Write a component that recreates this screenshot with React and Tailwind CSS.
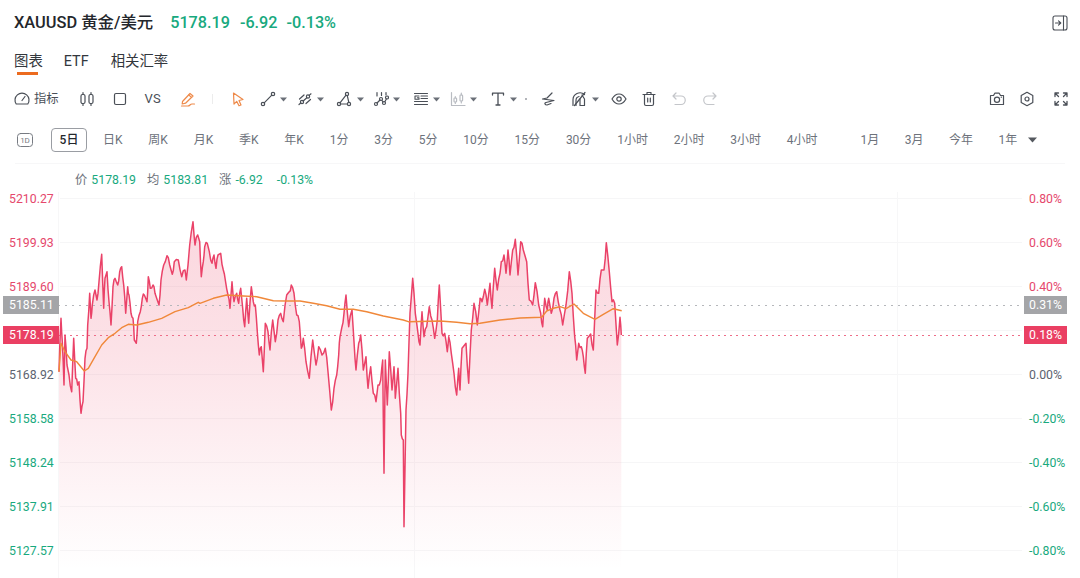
import React from "react";

const raw = [
  [55, 215, [[12,470],[14,400],[18,310],[22,380],[27,510],[30,360],[36,450],[42,480],[50,530],[56,370],[62,490],[68,510],[72,500],[78,595],[84,560],[90,430],[96,400],[98,330],[104,235],[108,310],[112,270],[120,225],[126,255],[132,200],[140,118],[146,280],[150,190],[156,170],[162,260],[168,330],[174,215],[180,190],[188,210],[194,170],[200,155],[206,210],[212,295],[218,215],[222,240],[228,295],[234,310],[238,375],[244,385],[248,320],[256,290],[262,250],[268,240],[276,260],[280,185],[286,220],[294,210],[300,235],[312,270],[318,195],[326,150],[336,122],[344,150],[352,178],[358,140],[370,135],[380,185],[390,165],[394,195],[404,90],[414,20],[420,90],[428,60],[434,80]]],
  [200, 215, [[4,185],[10,140],[14,95],[22,85],[28,110],[36,145],[42,120],[48,160],[54,120],[62,115],[70,165],[76,195],[84,240],[90,280],[96,200],[102,260],[110,235],[116,265],[122,220],[128,280],[134,335],[140,250],[146,325],[154,215],[160,260],[166,270],[172,350],[178,420],[184,395],[190,470],[196,325],[204,350],[210,405],[218,315],[226,380],[234,315],[242,295],[250,320],[260,240],[268,230],[274,210],[282,235],[290,300],[298,320],[304,400],[310,370],[318,440],[328,490],[338,375],[348,450],[356,395],[366,420],[376,400],[384,470],[394,585],[402,520],[410,480],[416,420]]],
  [340, 270, [[0,200],[6,170],[12,130],[18,75],[26,170],[36,120],[42,215],[48,300],[56,220],[62,195],[70,300],[78,260],[84,355],[92,290],[100,370],[108,395],[114,345],[122,330],[128,270],[132,610],[136,270],[142,405],[148,245],[156,360],[162,290],[166,385],[174,295],[182,430],[184,495],[190,510],[192,770],[198,420],[204,310],[210,130],[218,25],[226,130],[234,190],[240,225],[246,125],[252,200],[260,170],[268,110],[276,150],[284,205],[292,150],[298,45],[306,190],[314,190],[322,245],[326,200],[334,250],[342,310],[350,375],[356,295],[360,360],[366,235],[378,220],[386,340],[394,180],[402,100],[412,165],[420,90]]],
  [480, 230, [[0,205],[6,215],[14,178],[22,225],[30,160],[36,235],[44,115],[52,180],[60,130],[64,95],[72,75],[78,130],[84,60],[90,135],[98,60],[106,28],[114,135],[122,35],[130,60],[140,95],[148,210],[158,225],[166,158],[176,225],[182,250],[188,290],[194,205],[202,240],[206,205],[214,250],[222,205],[230,185],[240,240],[248,285],[258,225],[268,125],[276,190],[284,320],[290,390],[296,340],[304,350],[310,380],[316,430],[322,325],[332,312],[340,360],[348,180],[356,190],[364,120],[372,120],[379,38],[388,125],[396,215],[404,220],[412,345],[420,262],[424,315]]],
];
const avgRaw = [
  [55, 215, [[12,470],[18,385],[30,410],[48,435],[65,440],[88,468],[100,460],[120,425],[140,390],[160,368],[180,355],[200,338],[220,328],[245,330],[280,322],[320,310],[360,290],[400,278],[430,262]]],
  [200, 215, [[0,265],[40,250],[80,240],[130,243],[170,245],[220,257],[260,258],[300,258],[340,265],[380,272],[420,283]]],
  [340, 270, [[40,118],[80,125],[130,138],[190,150],[205,155],[300,153],[350,157],[390,161]]],
  [480, 230, [[0,280],[60,270],[120,264],[185,262],[200,243],[220,235],[240,230],[258,236],[282,222],[310,250],[345,268],[370,253],[400,236],[425,242]]],
];
const toPts = (segs) =>
  segs.flatMap(([ox, oy, pts]) => pts.map(([x, y]) => [ox + x / 3, oy + y / 3]));
const dense = (pts) => {
  const out = [];
  pts.forEach((p, i) => {
    out.push(p);
    const q = pts[i + 1];
    if (q && q[0] - p[0] > 1.2) {
      const off = (((i * 7) % 5) - 2) * 1.3;
      out.push([(p[0] + q[0]) / 2, (p[1] + q[1]) / 2 + off]);
    }
  });
  return out;
};
const fmt = (pts) => pts.map((p, i) => `${i ? "L" : "M"}${p[0].toFixed(1)} ${p[1].toFixed(1)}`).join("");
const price = dense(toPts(raw));
const lineD = fmt(price);
const areaD = `${lineD}L${price[price.length - 1][0].toFixed(1)} 578L${price[0][0].toFixed(1)} 578Z`;
const avgD = fmt(toPts(avgRaw));

const red = "text-[#e5486c]";
const green = "text-[#18a97e]";
const gray = "text-[#5c6370]";
const left = [
  ["5210.27", red], ["5199.93", red], ["5189.60", red],
  ["", ""], ["5168.92", gray], ["5158.58", green],
  ["5148.24", green], ["5137.91", green], ["5127.57", green],
];
const right = [
  ["0.80%", red], ["0.60%", red], ["0.40%", red],
  ["", ""], ["0.00%", gray], ["-0.20%", green],
  ["-0.40%", green], ["-0.60%", green], ["-0.80%", green],
];

const Ic = ({ children, w = 16, h = 16, c = "#4a4f57", sw = 1.2, className = "" }) => (
  <svg width={w} height={h} viewBox={`0 0 ${w} ${h}`} fill="none" stroke={c} strokeWidth={sw} strokeLinecap="round" strokeLinejoin="round" className={`shrink-0 ${className}`}>
    {children}
  </svg>
);
const Caret = ({ className = "" }) => (
  <svg width="7" height="5" viewBox="0 0 7 5" className={`shrink-0 ${className}`}><path d="M0 0.5H7L3.5 4.5Z" fill="#6b7078" /></svg>
);

const frames1 = ["日K", "周K", "月K", "季K", "年K", "1分", "3分", "5分", "10分", "15分", "30分", "1小时", "2小时", "3小时", "4小时"];
const frames2 = ["1月", "3月", "今年", "1年"];

export default function App() {
  return (
    <div className="w-[1080px] h-[578px] overflow-hidden bg-white font-['Roboto','Noto_Sans_CJK_SC',sans-serif]">
      {/* Header */}
      <div className="flex items-center h-[46px] pl-[14px] pr-[12px]">
        <span className="text-[16.4px] font-medium text-[#24272c]">XAUUSD 黄金/美元</span>
        <span className="ml-[17px] text-[16.2px] font-medium text-[#18a97e]">5178.19</span>
        <span className="ml-[10px] text-[16.2px] font-medium text-[#18a97e]">-6.92</span>
        <span className="ml-[9px] text-[16.2px] font-medium text-[#18a97e]">-0.13%</span>
        <Ic w={16} h={16} className="ml-auto" sw={1.1}>
          <rect x="1" y="1" width="14" height="14" rx="2" />
          <path d="M11.5 1V15M3.5 8H8.5M6.5 5.8L8.8 8L6.5 10.2" />
        </Ic>
      </div>

      {/* Tabs */}
      <div className="flex h-[30px] pl-[14px] pt-[7px] text-[14.4px] leading-[18px] text-[#33373d]">
        <div className="relative">
          <span>图表</span>
          <div className="absolute left-[3px] top-[19px] w-[21px] h-[3px] bg-[#ec6b1f]" />
        </div>
        <span className="ml-[21px]">ETF</span>
        <span className="ml-[22px]">相关汇率</span>
      </div>

      {/* Toolbar */}
      <div className="flex items-center h-[46px] pl-[14px] pr-[11px] text-[12.3px] text-[#4a4f57]">
        <Ic w={16} h={16}>
          <path d="M2.2 13A7 7 0 1 1 13.8 13H2.2Z" />
          <path d="M8 9.5L11 5.5" />
        </Ic>
        <span className="ml-[4px]">指标</span>
        <Ic w={16} h={16} className="ml-[20px]">
          <rect x="2" y="3.5" width="4" height="9" rx="1.5" />
          <path d="M4 1.5V3.5M4 12.5V14.5M12 1.5V3.5M12 12.5V14.5" />
          <rect x="10" y="3.5" width="4" height="9" rx="1.5" />
        </Ic>
        <Ic w={14} h={14} className="ml-[18px]"><rect x="1.5" y="1.5" width="11" height="11" rx="1.5" /></Ic>
        <span className="ml-[18px] text-[13px]">VS</span>
        <Ic w={16} h={16} c="#ee8a4a" className="ml-[19px]">
          <path d="M2.5 10.5L10 2.5L13 5L5.5 12.2L2.2 13Z" />
          <path d="M8.8 4L11.6 6.4M1.5 15H8C10 15 10 13 12 13H14.5" />
        </Ic>
        <div className="ml-[16px] w-px h-[10px] bg-[#ececec]" />
        <Ic w={14} h={16} c="#ee8a4a" className="ml-[18px]">
          <path d="M2.5 2L12 8.5L8 9.5L10 14L8 14.8L5.8 10.4L3 13Z" />
        </Ic>
        <Ic w={16} h={16} className="ml-[15px]">
          <circle cx="3" cy="13" r="1.7" /><circle cx="13" cy="3" r="1.7" /><path d="M4.2 11.8L11.8 4.2" />
        </Ic>
        <Caret className="ml-[4px]" />
        <Ic w={16} h={16} className="ml-[10px]">
          <circle cx="5" cy="11" r="1.6" /><circle cx="11" cy="5.5" r="1.6" />
          <path d="M2 13.5L3.8 12M6.2 10L9.8 6.8M12.2 4.4L14 2.8M2.5 8L7 4M9 12.5L13.5 8.5" />
        </Ic>
        <Caret className="ml-[4px]" />
        <Ic w={16} h={16} className="ml-[12px]">
          <circle cx="3" cy="13" r="1.6" /><circle cx="13" cy="13" r="1.6" /><circle cx="11" cy="3" r="1.6" />
          <path d="M4.6 13H11.4M4 11.8L10 4.2M11.3 4.6L12.8 11.4" />
        </Ic>
        <Caret className="ml-[5px]" />
        <Ic w={16} h={16} className="ml-[9px]">
          <circle cx="3" cy="13" r="1.5" /><circle cx="8" cy="8" r="1.5" /><circle cx="11" cy="12" r="1.5" /><circle cx="14" cy="6.5" r="1.5" />
          <path d="M4 12L7 9M9 9.5L10 11M11.8 10.8L13.4 8M4 1.5V5M8.5 1.5V4.5M13 1.5V4" />
        </Ic>
        <Caret className="ml-[4px]" />
        <Ic w={16} h={16} className="ml-[13px]" sw={1.1}>
          <path d="M1.5 2.5H14.5M1.5 13.5H14.5M8 5H14.5M8 7.5H14.5M1.5 10.5H14.5" />
          <path d="M6 5H2V8.3H6V6.8H4.4" />
        </Ic>
        <Caret className="ml-[4px]" />
        <Ic w={16} h={16} c="#b9bcc2" className="ml-[10px]">
          <path d="M1.5 1.5V14.5H15" />
          <rect x="4" y="7" width="2.6" height="4" rx="0.8" /><rect x="10" y="4" width="2.6" height="6" rx="0.8" />
          <path d="M5.3 5.5V7M5.3 11V12.5M11.3 2V4M11.3 10V12" />
        </Ic>
        <Caret className="ml-[4px]" />
        <Ic w={14} h={16} sw={1.3} className="ml-[14px]">
          <path d="M1.5 4V2.2H12.5V4M7 2.2V14M5 14H9" />
        </Ic>
        <Caret className="ml-[5px]" />
        <div className="ml-[8px] w-[2px] h-[2px] rounded-full bg-[#9a9da3]" />
        <Ic w={16} h={16} className="ml-[13px]">
          <path d="M12 2L7 7L2.5 8L14 9.5L6 11.5C4 12 5 14 7 14L11 12.5" />
        </Ic>
        <Ic w={16} h={16} className="ml-[15px]">
          <path d="M2 14.5V9A7 7 0 0 1 13.5 3.5" /><path d="M14 1.5L3.5 14.5" /><path d="M9 8L9 14.5H13.5V8L11 4" /><path d="M5 14.5V9.5A4 4 0 0 1 8 5.5" />
        </Ic>
        <Caret className="ml-[5px]" />
        <Ic w={16} h={16} className="ml-[12px]">
          <path d="M1 8C3 4.5 5.5 3 8 3C10.5 3 13 4.5 15 8C13 11.5 10.5 13 8 13C5.5 13 3 11.5 1 8Z" /><circle cx="8" cy="8" r="2.2" />
        </Ic>
        <Ic w={14} h={16} className="ml-[15px]">
          <path d="M1 3.5H13M5 3.5V1.5H9V3.5M2.5 3.5V13A1.5 1.5 0 0 0 4 14.5H10A1.5 1.5 0 0 0 11.5 13V3.5M5.7 7V11M8.3 7V11" />
        </Ic>
        <Ic w={16} h={16} c="#c4c6ca" className="ml-[15px]">
          <path d="M5 2L2 5L5 8M2 5H10A4 4 0 0 1 10 13.5H4" />
        </Ic>
        <Ic w={16} h={16} c="#c4c6ca" className="ml-[15px]">
          <path d="M11 2L14 5L11 8M14 5H6A4 4 0 0 0 6 13.5H12" />
        </Ic>
        <div className="ml-auto flex items-center gap-[14px]">
          <Ic w={16} h={16}>
            <path d="M1.5 4.5H4.5L5.8 2.2H10.2L11.5 4.5H14.5V13.5H1.5Z" /><circle cx="8" cy="8.8" r="2.6" />
            <path d="M12.2 6.2H12.4" />
          </Ic>
          <Ic w={16} h={16}>
            <path d="M8 1.3L13.8 4.6V11.4L8 14.7L2.2 11.4V4.6Z" /><circle cx="8" cy="8" r="2" />
          </Ic>
          <Ic w={16} h={16} className="ml-[4px]" sw={1.3}>
            <path d="M2 5.5V2H5.5M2 2L5.5 5.5M14 5.5V2H10.5M14 2L10.5 5.5M2 10.5V14H5.5M2 14L5.5 10.5M14 10.5V14H10.5M14 14L10.5 10.5" />
          </Ic>
        </div>
      </div>

      {/* Timeframes */}
      <div className="flex items-center h-[36px] pl-[17px] text-[12px] text-[#6d727b]">
        <Ic w={16} h={14} c="#777b82" sw={1}>
          <rect x="0.5" y="0.5" width="15" height="13" rx="3" />
          <text x="8" y="10" textAnchor="middle" fontSize="8" stroke="none" fill="#777b82">1D</text>
        </Ic>
        <div className="ml-[18px] w-[36px] h-[24px] flex items-center justify-center border border-[#9a9da3] rounded-[4px] font-medium text-[#24272c]">5日</div>
        <div className="ml-[16px] flex items-center gap-[25.8px]">
          {frames1.map((f) => <span key={f}>{f}</span>)}
        </div>
        <div className="ml-[43px] flex items-center gap-[25.5px]">
          {frames2.map((f) => <span key={f}>{f}</span>)}
        </div>
        <svg width="9" height="6" viewBox="0 0 9 6" className="ml-[11px]"><path d="M0 0.5H9L4.5 5.5Z" fill="#55595f" /></svg>
      </div>

      {/* Chart */}
      <div className="relative mt-[5px] h-[415px] text-[12.3px]">
        <svg className="absolute left-0 top-0" width="1080" height="415" viewBox="0 163 1080 415">
          <defs>
            <linearGradient id="area" gradientUnits="userSpaceOnUse" x1="0" y1="225" x2="0" y2="570">
              <stop offset="0" stopColor="#ee5a78" stopOpacity="0.24" />
              <stop offset="0.35" stopColor="#ee5a78" stopOpacity="0.18" />
              <stop offset="1" stopColor="#ee5a78" stopOpacity="0" />
            </linearGradient>
          </defs>
          <path d="M15 163.5H1065" stroke="#f7f7f8" />
          {[198, 242, 286, 330, 374, 418, 462, 506, 550].map((y) => (
            <path key={y} d={`M60 ${y + 0.5}H1022`} stroke="#f6f6f7" />
          ))}
          {[58, 414, 897].map((x) => (
            <path key={x} d={`M${x + 0.5} 192V578`} stroke="#f7f7f8" />
          ))}
          <path d={areaD} fill="url(#area)" />
          <path d="M58 305.5H1024" stroke="#b5b7bb" strokeDasharray="2 5" />
          <path d="M58 335.5H1024" stroke="#ee6d88" strokeDasharray="2 4" />
          <path d={lineD} fill="none" stroke="#ea4268" strokeWidth="1.5" strokeLinejoin="round" />
          <path d={avgD} fill="none" stroke="#f0883a" strokeWidth="1.4" strokeLinejoin="round" />
        </svg>

        <div className="relative h-[29px] pl-[75px] pt-[6px] flex items-start leading-[22px] text-[#6d727b]">
          <span>价</span>
          <span className="ml-[4px] text-[#18a97e]">5178.19</span>
          <span className="ml-[11px]">均</span>
          <span className="ml-[4px] text-[#18a97e]">5183.81</span>
          <span className="ml-[11px]">涨</span>
          <span className="ml-[4px] text-[#18a97e]">-6.92</span>
          <span className="ml-[14px] text-[#18a97e]">-0.13%</span>
        </div>

        <div className="relative flex justify-between">
          <div className="pl-[9px] flex flex-col gap-[30px]">
            {left.map(([t, c], i) => <div key={i} className={`h-[14px] leading-[14px] ${c}`}>{t}</div>)}
          </div>
          <div className="w-[51px] flex flex-col gap-[30px]">
            {right.map(([t, c], i) => <div key={i} className={`h-[14px] leading-[14px] ${c}`}>{t}</div>)}
          </div>
        </div>

        <div className="absolute left-[3px] top-[133px] w-[56px] h-[18px] pl-[6px] leading-[18px] bg-[#a4a5a8] text-white">5185.11</div>
        <div className="absolute left-[3px] top-[163px] w-[56px] h-[18px] pl-[6px] leading-[18px] bg-[#ea3f63] text-white">5178.19</div>
        <div className="absolute left-[1024px] top-[133px] w-[43px] h-[18px] pl-[5px] leading-[18px] bg-[#a4a5a8] text-white">0.31%</div>
        <div className="absolute left-[1024px] top-[163px] w-[43px] h-[18px] pl-[5px] leading-[18px] bg-[#ea3f63] text-white">0.18%</div>
      </div>
    </div>
  );
}
